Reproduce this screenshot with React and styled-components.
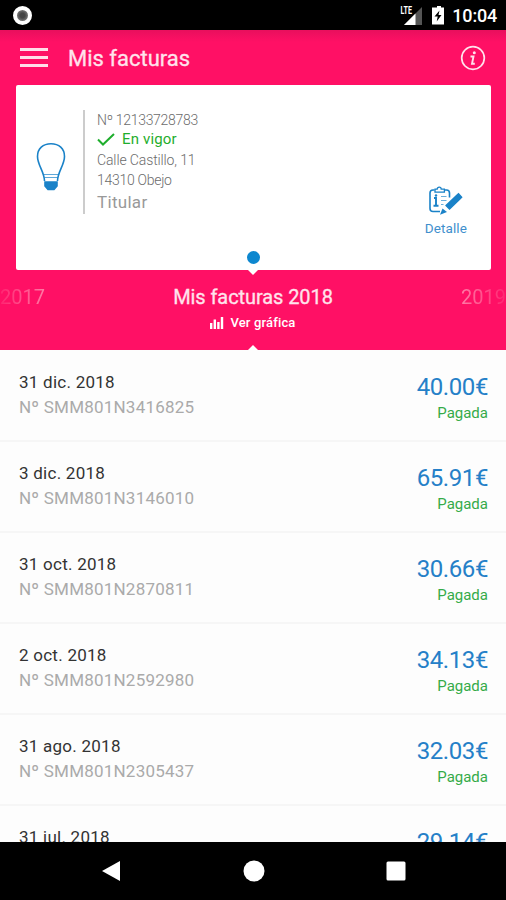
import styled, {createGlobalStyle} from 'styled-components';

const invoices = [
    {date: '31 dic. 2018', number: 'SMM801N3416825', amount: '40.00€', status: 'Pagada'},
    {date: '3 dic. 2018', number: 'SMM801N3146010', amount: '65.91€', status: 'Pagada'},
    {date: '31 oct. 2018', number: 'SMM801N2870811', amount: '30.66€', status: 'Pagada'},
    {date: '2 oct. 2018', number: 'SMM801N2592980', amount: '34.13€', status: 'Pagada'},
    {date: '31 ago. 2018', number: 'SMM801N2305437', amount: '32.03€', status: 'Pagada'},
    {date: '31 jul. 2018', amount: '29.14€'},
];

function StatusIcons() {
    return (
        <svg width='52' height='30' viewBox='0 0 52 30'>
            <text x='0.5' y='14' fontSize='10.5' fontWeight='700' fill='#fff' textLength='11.5' lengthAdjust='spacingAndGlyphs'>LTE</text>
            <path d='M22 7V25H4z' fill='#000' stroke='#000' strokeWidth='2'/>
            <path d='M22 7V25H4z' fill='#555'/>
            <path d='M15.5 13.5V25H4z' fill='#fff'/>
            <path d='M35 7.5h2V6h4v1.5H44V24.5H32V7.5z' fill='#fff'/>
            <path d='M39.5 10.5l-5 6h3.200l-1 5 4.800-6.500h-3z' fill='#000'/>
        </svg>
    );
}

function BulbIcon() {
    return (
        <svg width='30' height='50' viewBox='0 0 30 50' fill='none' stroke='#1a82c8' strokeWidth='1.6'>
            <path d='M8.500 39C8.500 30 1.500 23 1.500 14.500 1.500 6.500 7 1.800 15 1.800s13.500 4.700 13.500 12.700C28.500 23 21.500 30 21.500 39'/>
            <path d='M8 32.500h14M8.500 35.500h13' strokeWidth='1.200' opacity='0.700'/>
            <path d='M9 40h12v4l-3 3.500h-6L9 44z' fill='#1a82c8'/>
        </svg>
    );
}

function DetailIcon() {
    return (
        <svg width='36' height='30' viewBox='0 0 36 30' fill='none' stroke='#1a82c8'>
            <path d='M6.500 4H5a3 3 0 0 0-3 3v15.500a3 3 0 0 0 3 3h7M16 4h2.500a3 3 0 0 1 3 3v4.500' strokeWidth='1.600'/>
            <path d='M7 6.200V3.200h2.200a2 2 0 0 1 4 0h3.200v3z' strokeWidth='1.300'/>
            <path d='M6 12h2v7.500M5.500 19.800h5' strokeWidth='1.900'/>
            <circle cx='8' cy='9.500' r='1.200' fill='#1a82c8' stroke='none'/>
            <path d='M13 10.500h5.500M13 14.500h5.500M13 18.500h2.500' strokeWidth='1' opacity='0.650'/>
            <path d='M18 19.500L28.500 9.500l2-1.800 3.200 3.600-2 1.900L21.500 23z' fill='#1a82c8' strokeWidth='1.300'/>
            <path d='M14.500 22.500l4.500 3.600-7 2.600z' fill='#1a82c8' stroke='none'/>
        </svg>
    );
}

function App() {
    return (
        <Screen>
            <GlobalStyle/>
            <StatusBar>
                <Recorder/>
                <StatusRight>
                    <StatusIcons/>
                    <Clock>10:04</Clock>
                </StatusRight>
            </StatusBar>
            <Header>
                <Burger>
                    <span/>
                    <span/>
                    <span/>
                </Burger>
                <Title>Mis facturas</Title>
                <svg width='26' height='26' viewBox='0 0 26 26' fill='none' stroke='#ffe3ec'>
                    <circle cx='13' cy='13' r='11.300' strokeWidth='1.700'/>
                    <circle cx='14.300' cy='7.700' r='1.500' fill='#ffe3ec' stroke='none'/>
                    <path d='M10.500 11.500h3L12 18.800h2.800' strokeWidth='1.900'/>
                </svg>
            </Header>
            <ContractCard>
                <BulbIcon/>
                <Contract>
                    <Line $spacing='-0.3px'>Nº 12133728783</Line>
                    <Active>
                        <svg width='18' height='14' viewBox='0 0 18 14' fill='none' stroke='#1fae2d' strokeWidth='2'>
                            <path d='M1 6.500l5 5L17 1'/>
                        </svg>
                        En vigor
                    </Active>
                    <Line $spacing='-0.12px'>Calle Castillo, 11</Line>
                    <Line $spacing='-0.28px'>14310 Obejo</Line>
                    <Holder>Titular</Holder>
                </Contract>
                <Detail>
                    <DetailIcon/>
                    Detalle
                </Detail>
                <PageDot/>
            </ContractCard>
            <Years>
                <SideYear>2017</SideYear>
                <Current>
                    <YearTitle>Mis facturas 2018</YearTitle>
                    <Chart>
                        <svg width='14' height='12' viewBox='0 0 14 12' fill='#fff'>
                            <path d='M0 6h2.400v6H0zM3.600 2.500H6V12H3.600zM7.200 5h2.400v7H7.200zM10.800 0h2.400v12h-2.400z'/>
                        </svg>
                        Ver gráfica
                    </Chart>
                </Current>
                <SideYear $right>2019</SideYear>
            </Years>
            <List>
                {invoices.map(item => (
                    <Row key={item.date}>
                        <div>
                            <InvoiceDate>{item.date}</InvoiceDate>
                            {item.number && <InvoiceNumber>Nº {item.number}</InvoiceNumber>}
                        </div>
                        <Right>
                            <Amount>{item.amount}</Amount>
                            {item.status && <Paid>{item.status}</Paid>}
                        </Right>
                    </Row>
                ))}
            </List>
            <NavBar>
                <svg width='20' height='22' viewBox='0 0 20 22' fill='#fff'><path d='M19 1v20L1 11z'/></svg>
                <svg width='22' height='22' viewBox='0 0 22 22' fill='#fff'><circle cx='11' cy='11' r='10.500'/></svg>
                <svg width='20' height='20' viewBox='0 0 20 20' fill='#fff'><rect x='0.500' y='0.500' width='19' height='19' rx='1.500'/></svg>
            </NavBar>
        </Screen>
    );
}

const GlobalStyle = createGlobalStyle`
    * {
        box-sizing: border-box;
    }

    body {
        margin: 0;
        font-family: Roboto, 'Noto Sans', sans-serif;
    }
`;

const Screen = styled.div`
    width: 506px;
    height: 900px;
    display: flex;
    flex-direction: column;
    overflow: hidden;
    background: #ff1065;
`;

const StatusBar = styled.div`
    height: 30px;
    flex: none;
    display: flex;
    align-items: center;
    justify-content: space-between;
    padding: 0 9px 0 13px;
    background: #000;
`;

const Recorder = styled.div`
    width: 19px;
    height: 19px;
    border: 4px solid #fff;
    border-radius: 50%;
    background: radial-gradient(#444 30%, #999);
`;

const StatusRight = styled.div`
    display: flex;
    align-items: center;
`;

const Clock = styled.div`
    color: #fff;
    font-size: 18px;
    line-height: 30px;
    font-weight: 500;
    padding-top: 2px;
    letter-spacing: -0.2px;
`;

const Header = styled.div`
    height: 55px;
    flex: none;
    display: flex;
    align-items: center;
    padding: 0 20px;
    background: linear-gradient(#e80f5d, #ff1065 12px);
`;

const Burger = styled.div`
    display: flex;
    flex-direction: column;
    gap: 5px;

    span {
        width: 28px;
        height: 3px;
        background: #ffdde8;
    }
`;

const Title = styled.div`
    flex: 1;
    margin-left: 20px;
    padding-top: 2px;
    color: #ffe3ec;
    font-size: 22px;
    -webkit-text-stroke: 0.3px #ffe3ec;
`;

const ContractCard = styled.div`
    position: relative;
    height: 185px;
    flex: none;
    display: flex;
    align-items: flex-start;
    margin: 0 15px 0 16px;
    padding: 25px 24px 0 20px;
    border-radius: 2px;
    background: #fff;

    > svg {
        margin-top: 32px;
    }

    &::after {
        content: '';
        position: absolute;
        left: 232px;
        top: 185px;
        border: 5px solid transparent;
        border-top-color: #fff;
        border-bottom: 0;
    }
`;

const Contract = styled.div`
    flex: 1;
    height: 104px;
    margin-left: 17px;
    padding-left: 12px;
    border-left: 2px solid #ccc;
`;

const Line = styled.div`
    color: #6c6c6c;
    font-size: 14px;
    line-height: 20px;
    font-weight: 300;
    letter-spacing: ${props => props.$spacing || '0'};
`;

const Active = styled.div`
    display: flex;
    align-items: center;
    gap: 7px;
    color: #1fae2d;
    font-size: 15px;
    line-height: 19px;
    letter-spacing: 0.15px;
    padding-bottom: 1px;
`;

const Holder = styled.div`
    color: #999;
    font-size: 17px;
    line-height: 25px;
    letter-spacing: 0.3px;
`;

const Detail = styled.div`
    display: flex;
    flex-direction: column;
    align-items: center;
    margin-top: 76px;
    color: #3f8fcd;
    font-size: 13.5px;
    line-height: 24px;
    letter-spacing: 0.1px;
`;

const PageDot = styled.div`
    position: absolute;
    left: 231px;
    top: 166px;
    width: 13px;
    height: 13px;
    border-radius: 50%;
    background: #0d87cf;
`;

const Years = styled.div`
    position: relative;
    height: 80px;
    flex: none;
    display: flex;
    justify-content: space-between;
    padding-top: 14px;

    &::after {
        content: '';
        position: absolute;
        left: 248px;
        bottom: 0;
        border: 5px solid transparent;
        border-bottom-color: #fff;
        border-top: 0;
    }
`;

const SideYear = styled.div`
    width: 60px;
    color: #ff7ba6;
    font-size: 20px;
    line-height: 26px;
    text-align: ${props => props.$right ? 'right' : 'left'};
    mask-image: linear-gradient(${props => props.$right ? 'to left' : 'to right'}, rgba(0, 0, 0, 0.2), #000 45px);
`;

const Current = styled.div`
    text-align: center;
`;

const YearTitle = styled.div`
    color: #ffe3ec;
    font-size: 20px;
    line-height: 26px;
    letter-spacing: -0.08px;
    -webkit-text-stroke: 0.3px #ffe3ec;
`;

const Chart = styled.div`
    display: flex;
    align-items: center;
    justify-content: center;
    gap: 6px;
    color: #fff;
    font-size: 13px;
    line-height: 26px;
    font-weight: 500;
    letter-spacing: 0.15px;
`;

const List = styled.div`
    flex: 1;
    overflow: hidden;
    background: #fdfdfd;
`;

const Row = styled.div`
    height: 91px;
    display: flex;
    justify-content: space-between;
    padding: 20px 18px 0 19px;
    box-shadow: inset 0 -1px #f6f6f6, 0 1px #f6f6f6;
`;

const InvoiceDate = styled.div`
    color: #333;
    font-size: 17px;
    line-height: 25px;
    letter-spacing: 0.25px;
`;

const InvoiceNumber = styled.div`
    color: #aaa;
    font-size: 17px;
    line-height: 25px;
    letter-spacing: 0.22px;
`;

const Right = styled.div`
    text-align: right;
`;

const Amount = styled.div`
    color: #2580c8;
    font-size: 24px;
    line-height: 34px;
    letter-spacing: -0.4px;
`;

const Paid = styled.div`
    color: #35ab49;
    font-size: 15px;
    line-height: 19px;
`;

const NavBar = styled.div`
    height: 58px;
    flex: none;
    display: flex;
    align-items: center;
    justify-content: space-between;
    padding: 0 100px 0 101px;
    background: #000;
`;

export default App;
